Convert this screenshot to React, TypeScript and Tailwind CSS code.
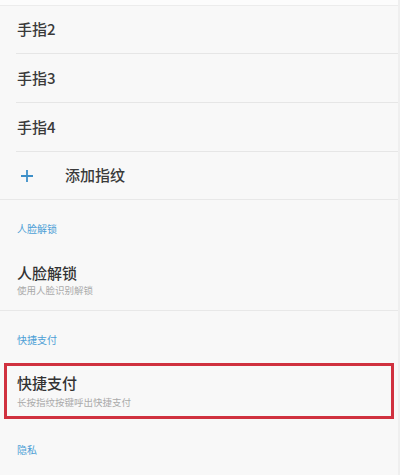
import React from "react";

const font = { fontFamily: '"Noto Sans CJK SC", "Noto Sans", sans-serif' };

function Divider({ inset = true }: { inset?: boolean }) {
  return <div className={inset ? "ml-[16px] h-px bg-[#e6e6e6]" : "h-px bg-[#e8e8e8]"} />;
}

function Row({ label, h }: { label: string; h: string }) {
  return (
    <div className={`flex items-center pl-[17px] text-[15px] font-medium text-[#3a3a3a] ${h}`}>
      {label}
    </div>
  );
}

export default function App() {
  return (
    <div className="w-[400px] h-[475px] overflow-hidden bg-[#f8f8f8] border-r-2 border-[#efefef]" style={font}>
      <div className="h-[5px] bg-[#fcfcfc]" />
      <div className="h-px bg-[#ececec]" />
      <Row label="手指2" h="h-[47px]" />
      <Divider />
      <Row label="手指3" h="h-[48px]" />
      <Divider />
      <Row label="手指4" h="h-[48px]" />
      <Divider />
      <div className="flex items-center h-[47px] text-[15px] font-medium text-[#3a3a3a]">
        <svg className="ml-[21px]" width="12" height="12" viewBox="0 0 12 12">
          <path d="M6 0v12M0 6h12" stroke="#3d8fc8" strokeWidth="1.8" />
        </svg>
        <span className="ml-[32px]">添加指纹</span>
      </div>
      <Divider inset={false} />
      <div className="h-[50px] pt-[22px] pl-[17px] text-[10px] leading-[14px] text-[#4d9fd6]">人脸解锁</div>
      <div className="h-[60px] pt-[13px] pl-[17px]">
        <div className="text-[15px] leading-[20px] font-medium text-[#333]">人脸解锁</div>
        <div className="text-[9.5px] leading-[14px] text-[#aaa]">使用人脸识别解锁</div>
      </div>
      <Divider inset={false} />
      <div className="h-[52px] pt-[22px] pl-[17px] text-[10px] leading-[14px] text-[#4d9fd6]">快捷支付</div>
      <div className="mx-[4px] h-[56px] border-[3px] border-[#d0313f] pt-[7px] pl-[10px]">
        <div className="text-[15px] leading-[20px] font-medium text-[#333]">快捷支付</div>
        <div className="mt-[2px] text-[9.5px] leading-[14px] text-[#aaa]">长按指纹按键呼出快捷支付</div>
      </div>
      <div className="pt-[24px] pl-[17px] text-[10px] leading-[14px] text-[#4d9fd6]">隐私</div>
    </div>
  );
}
